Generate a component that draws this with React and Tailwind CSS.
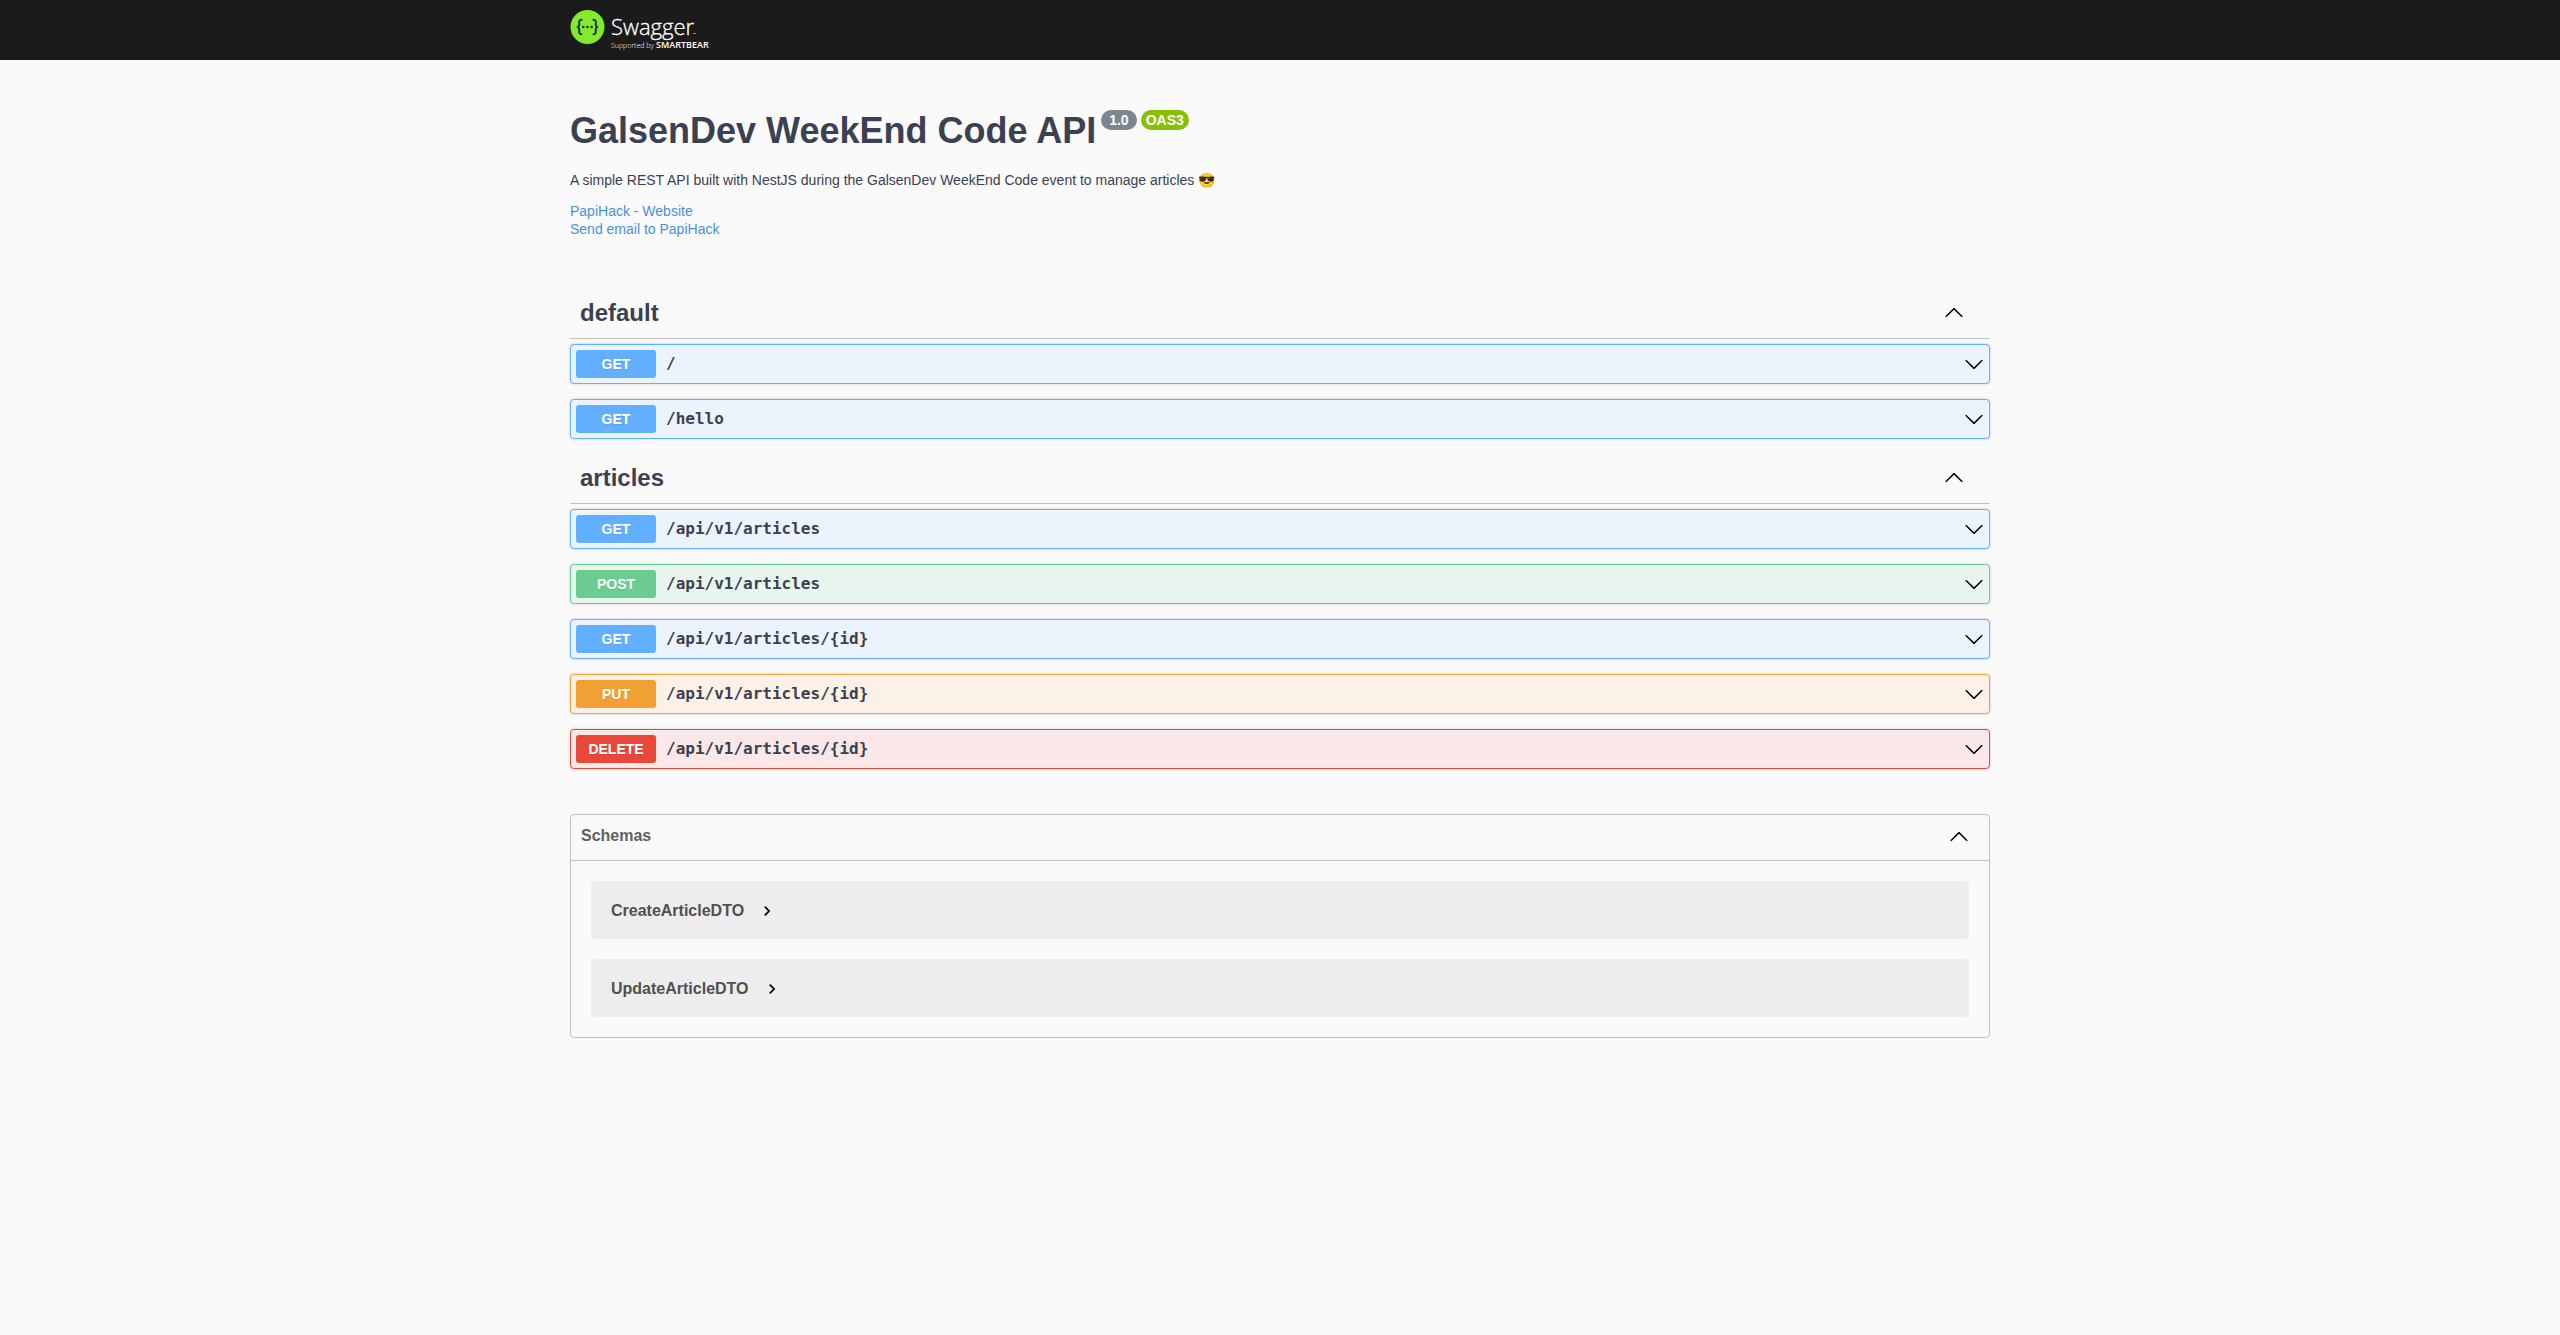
import React from "react";

const METHODS = {
  GET: {
    row: "border-[#61affe] bg-[#ebf3fc]",
    badge: "bg-[#61affe]",
  },
  POST: {
    row: "border-[#6bcd92] bg-[#e7f5ee]",
    badge: "bg-[#6bcd92]",
  },
  PUT: {
    row: "border-[#f1a033] bg-[#fbf1e6]",
    badge: "bg-[#f1a033]",
  },
  DELETE: {
    row: "border-[#e8473a] bg-[#fae7e7]",
    badge: "bg-[#e8473a]",
  },
};

const TAGS = [
  {
    name: "default",
    operations: [
      ["GET", "/"],
      ["GET", "/hello"],
    ],
  },
  {
    name: "articles",
    operations: [
      ["GET", "/api/v1/articles"],
      ["POST", "/api/v1/articles"],
      ["GET", "/api/v1/articles/{id}"],
      ["PUT", "/api/v1/articles/{id}"],
      ["DELETE", "/api/v1/articles/{id}"],
    ],
  },
];

const SCHEMAS = ["CreateArticleDTO", "UpdateArticleDTO"];

function ArrowDown() {
  return (
    <svg className="size-5 shrink-0" viewBox="0 0 20 20" aria-hidden="true">
      <path d="M17.418 6.109c.272-.268.709-.268.979 0s.271.701 0 .969l-7.908 7.83c-.27.268-.707.268-.979 0l-7.908-7.83c-.27-.268-.27-.701 0-.969.271-.268.709-.268.979 0L10 13.25l7.418-7.141z" />
    </svg>
  );
}

function ArrowUp() {
  return (
    <svg className="size-5 shrink-0" viewBox="0 0 20 20" aria-hidden="true">
      <path d="M17.418 14.908c.272.268.709.268.979 0s.271-.701 0-.969l-7.908-7.83c-.27-.268-.707-.268-.979 0l-7.908 7.83c-.27.268-.27.701 0 .969.271.268.709.268.979 0L10 7.767l7.418 7.141z" />
    </svg>
  );
}

function Logo() {
  return (
    <svg className="h-10 w-36" viewBox="0 0 144 40" role="img" aria-label="Swagger, supported by SmartBear">
      <circle cx="17.5" cy="17" r="17" fill="#85ea2d" />
      <g fill="none" stroke="#173647" strokeWidth="2">
        <path d="M12.3 9.8c-2.6-.1-3.2.8-3.1 2.8.2 2.6-.1 4.4-2.3 4.4 2.2 0 2.5 1.800 2.3 4.4-.1 2 .5 2.9 3.1 2.8" />
        <path d="M22.7 9.8c2.6-.1 3.2.8 3.1 2.8-.2 2.6.1 4.4 2.3 4.4-2.2 0-2.5 1.800-2.3 4.4.1 2-.5 2.9-3.1 2.8" />
      </g>
      <g fill="#173647">
        <circle cx="13.3" cy="17" r="1.3" />
        <circle cx="17.5" cy="17" r="1.3" />
        <circle cx="21.7" cy="17" r="1.3" />
      </g>
      <g fill="#fff" fontFamily='"Open Sans", sans-serif'>
        <text x="41" y="25" fontSize="22" fontWeight="300" stroke="#fff" strokeWidth="0.3">Swagger</text>
        <text x="41" y="38" fontSize="7" fontWeight="300">Supported by</text>
        <text x="86" y="38" fontSize="9" fontWeight="600">SMARTBEAR</text>
        <rect x="123" y="23" width="3" height="1" opacity="0.5" />
      </g>
    </svg>
  );
}

function Operation({ method, path }) {
  const style = METHODS[method];
  return (
    <button
      type="button"
      className={`flex h-10 w-full items-center rounded-sm border px-[5px] text-left shadow-[0_0_3px_rgba(0,0,0,0.19)] ${style.row}`}
    >
      <span
        className={`w-20 rounded-[3px] text-center text-sm leading-7 font-bold text-white [text-shadow:0_1px_0_rgba(0,0,0,0.1)] ${style.badge}`}
      >
        {method}
      </span>
      <span className="flex-1 px-2.5 font-['DejaVu_Sans_Mono',monospace] text-base font-bold">
        {path}
      </span>
      <ArrowDown />
    </button>
  );
}

function Tag({ name, operations }) {
  return (
    <section>
      <h3 className="mb-[5px] border-b border-[#3b4151]/30">
        <button type="button" className="flex h-[49px] w-full items-center pr-[26px] pb-1 pl-2.5 text-left text-2xl font-bold">
          <span className="flex-1 pt-[3px]">{name}</span>
          <ArrowUp />
        </button>
      </h3>
      <div className="flex flex-col gap-[15px] pb-[15px]">
        {operations.map(([method, path]) => (
          <Operation key={method + path} method={method} path={path} />
        ))}
      </div>
    </section>
  );
}

export default function App() {
  return (
    <div className="min-h-screen bg-[#fafafa] font-['Liberation_Sans',Arial,sans-serif] text-[#3b4151]">
      <header className="bg-[#1b1b1b] py-2.5">
        <div className="mx-auto max-w-[1460px] px-5">
          <a href="#top" className="block w-36">
            <Logo />
          </a>
        </div>
      </header>

      <main className="mx-auto max-w-[1460px] px-5">
        <div className="pt-12 pb-[51px]">
          <div className="flex items-start gap-[5px]">
            <h1 className="text-4xl leading-[46px] font-bold">GalsenDev WeekEnd Code API</h1>
            <div className="flex gap-1 pt-0.5 text-sm font-bold text-white">
              <span className="rounded-full bg-[#7d8492] px-2">1.0</span>
              <span className="rounded-full bg-[#89bf04] px-[5px]">OAS3</span>
            </div>
          </div>
          <p className="mt-4 text-sm">
            A simple REST API built with NestJS during the GalsenDev WeekEnd Code event to manage articles 😎
          </p>
          <div className="mt-3 flex flex-col items-start text-sm leading-[18px] text-[#4990e2]">
            <a href="#website">PapiHack - Website</a>
            <a href="#contact">Send email to PapiHack</a>
          </div>
        </div>

        {TAGS.map((tag) => (
          <Tag key={tag.name} {...tag} />
        ))}

        <section className="mt-[30px] rounded-sm border border-[#3b4151]/30">
          <h4 className="border-b border-[#3b4151]/30">
            <button type="button" className="flex h-[45px] w-full items-center pr-5 pb-1 pl-2.5 text-left text-base font-bold text-[#606060]">
              <span className="flex-1">Schemas</span>
              <ArrowUp />
            </button>
          </h4>
          <div className="flex flex-col gap-5 p-5">
            {SCHEMAS.map((name) => (
              <div key={name} className="rounded-sm bg-black/5 px-5 pt-[18px] pb-4">
                <button type="button" className="flex h-6 items-center gap-[13px] text-base font-bold text-[#505050]">
                  {name}
                  <svg className="size-5" viewBox="0 0 24 24" fill="#000" aria-hidden="true">
                    <path d="M10 6L8.59 7.41 13.17 12l-4.58 4.59L10 18l6-6z" />
                  </svg>
                </button>
              </div>
            ))}
          </div>
        </section>
      </main>
    </div>
  );
}
